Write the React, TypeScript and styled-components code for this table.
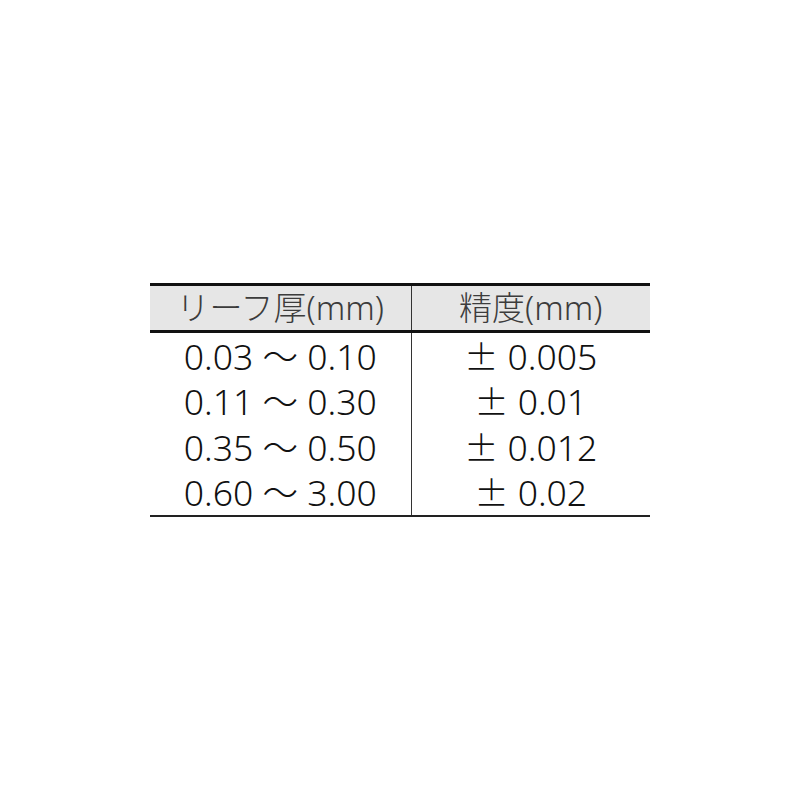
import React from "react";
import styled, { createGlobalStyle } from "styled-components";

const Global = createGlobalStyle`
  html, body { margin: 0; padding: 0; background: #fff; }
  body { font-family: "Noto Sans", "Noto Sans CJK JP", sans-serif; }
`;

const Page = styled.div`
  width: 800px;
  height: 800px;
  display: flex;
  justify-content: center;
  padding-top: 283px;
  box-sizing: border-box;
`;

const Table = styled.table`
  width: 500px;
  border-collapse: collapse;
  table-layout: fixed;
  height: fit-content;
  border-bottom: 2px solid #222;
`;

const HeadCell = styled.th`
  height: 44px;
  padding: 0;
  background: #e6e6e6;
  border-top: 3px solid #111;
  border-bottom: 3px solid #111;
  font-weight: 300;
  font-size: 33px;
  color: #3c3c3c;
  text-align: center;
  line-height: 36px;
  & + & { border-left: 1.5px solid #333; }
`;

const Cell = styled.td`
  height: 45.5px;
  padding: 0;
  font-size: 35.5px;
  font-weight: 300;
  color: #111;
  text-align: center;
  line-height: 38px;
  white-space: pre;
  & + & { border-left: 1.5px solid #333; }
`;

const PlusMinus = styled.span`
  font-family: "Noto Sans CJK JP", sans-serif;
  font-weight: 300;
  font-size: 34px;
`;

const rows = [
  ["0.03 ～ 0.10", "0.005"],
  ["0.11 ～ 0.30", "0.01"],
  ["0.35 ～ 0.50", "0.012"],
  ["0.60 ～ 3.00", "0.02"],
];

export default function App() {
  return (
    <>
      <Global />
      <Page>
        <Table>
          <colgroup>
            <col style={{ width: 261 }} />
            <col style={{ width: 239 }} />
          </colgroup>
          <thead>
            <tr>
              <HeadCell>リーフ厚(mm)</HeadCell>
              <HeadCell>精度(mm)</HeadCell>
            </tr>
          </thead>
          <tbody>
            {rows.map((r) => (
              <tr key={r[0]}>
                <Cell>{r[0]}</Cell>
                <Cell>
                  <PlusMinus>±</PlusMinus> {r[1]}
                </Cell>
              </tr>
            ))}
          </tbody>
        </Table>
      </Page>
    </>
  );
}
